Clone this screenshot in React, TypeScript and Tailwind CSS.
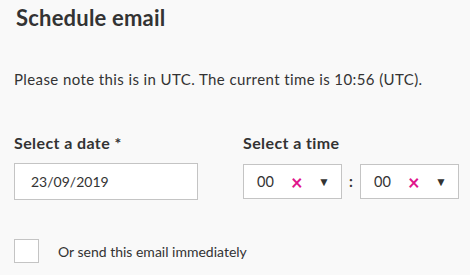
const font = { fontFamily: "Lato, 'Noto Sans', sans-serif" };

function TimeSelect({ value }: { value: string }) {
  return (
    <div className="flex h-[35px] w-[99px] items-center border border-[#c4c4c4] bg-white pl-[13px] text-[14.5px] text-[#333]">
      <span className="w-[34px]">{value}</span>
      <span className="w-[27px] text-[20px] font-bold leading-none text-[#e0148c]">×</span>
      <span className="text-[12px] leading-none text-[#333]">▼</span>
    </div>
  );
}

export default function App() {
  return (
    <div
      className="h-[275px] w-[470px] overflow-hidden bg-[#f9f9f9] px-[14px] text-[#333]"
      style={font}
    >
      <h1 className="ml-[2px] pt-[4px] text-[22px] font-bold leading-[28px] tracking-[0.2px] text-[#333]">
        Schedule email
      </h1>
      <p className="mt-[38px] text-[15px] leading-[18px] tracking-[0.4px]">
        Please note this is in UTC. The current time is 10:56 (UTC).
      </p>
      <div className="mt-[45px] flex">
        <div className="w-[229px] shrink-0">
          <label className="block text-[16px] font-bold leading-[20px] tracking-[0.4px]">
            Select a date *
          </label>
          <div className="mt-[10px] flex h-[37px] w-[184px] items-center border border-[#c4c4c4] bg-white pl-[16px] text-[14px]">
            23/09/2019
          </div>
        </div>
        <div>
          <label className="block text-[16px] font-bold leading-[20px] tracking-[0.4px]">
            Select a time
          </label>
          <div className="mt-[11px] flex items-center">
            <TimeSelect value="00" />
            <span className="w-[18px] text-center text-[15px] font-bold">:</span>
            <TimeSelect value="00" />
          </div>
        </div>
      </div>
      <label className="mt-[39px] flex items-center">
        <span className="block h-[24px] w-[25px] border border-[#c4c4c4] bg-white" />
        <span className="ml-[19px] text-[14px]">Or send this email immediately</span>
      </label>
    </div>
  );
}
